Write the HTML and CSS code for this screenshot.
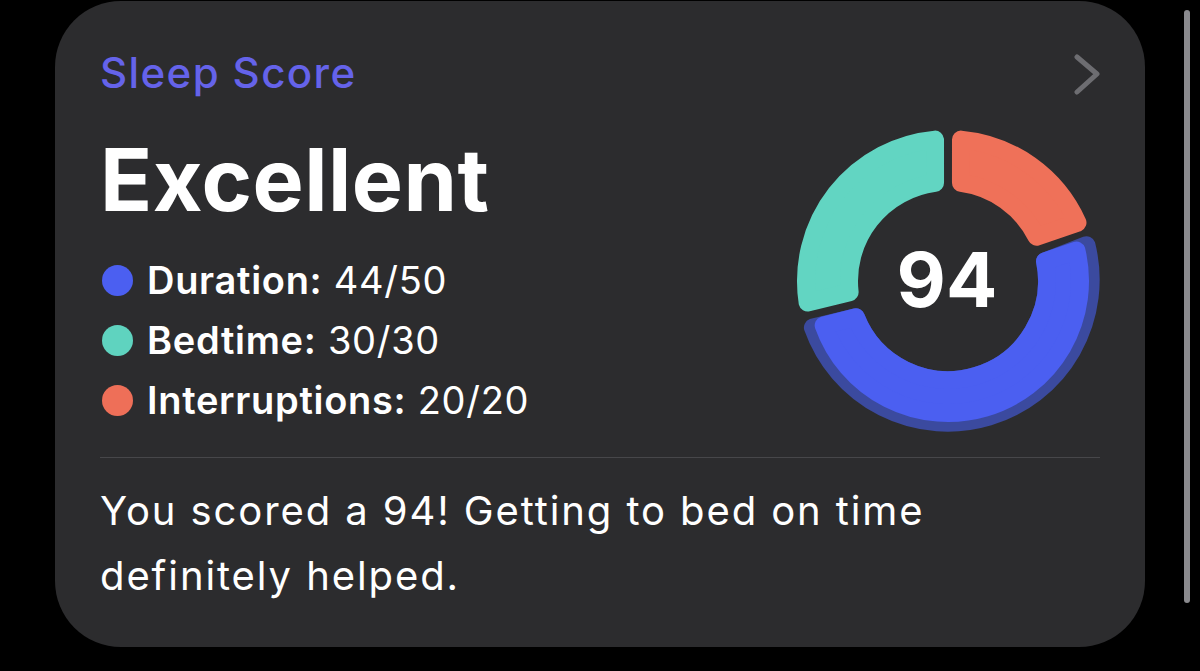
FILE: index.html
```html
<!DOCTYPE html>
<html lang="en">
<head>
<meta charset="utf-8">
<title>Sleep Score</title>
<link rel="stylesheet" href="styles.css">
</head>
<body>
<div class="screen">
  <section class="card">
    <div class="top">
      <div class="info">
        <h2 class="eyebrow">Sleep Score</h2>
        <h1 class="rating">Excellent</h1>
        <ul class="legend">
          <li><span class="dot dot-blue"></span><b>Duration:</b> 44/50</li>
          <li><span class="dot dot-teal"></span><b>Bedtime:</b> 30/30</li>
          <li><span class="dot dot-orange"></span><b>Interruptions:</b> 20/20</li>
        </ul>
      </div>
      <div class="side">
        <svg class="chevron" width="30" height="46" viewBox="0 0 30 46" aria-hidden="true">
          <path d="M7 6 L27 23 L7 41" fill="none" stroke="#6d6d71" stroke-width="5" stroke-linecap="round" stroke-linejoin="round"/>
        </svg>
        <svg class="donut" width="320" height="320" viewBox="0 0 320 320" aria-label="Score 94">
          <g stroke-width="18" stroke-linejoin="round">
            <path fill="#3b4a9f" stroke="#3b4a9f" d="M298.45 124.20 A143 143 0 0 1 24.9 206.5 L67.90 196.31 A99 99 0 0 0 257.02 140.29 Z"/>
            <path fill="#4b5ff1" stroke="#4b5ff1" d="M288.43 129.50 A132 132 0 0 1 35.68 204.37 L67.90 196.31 A99 99 0 0 0 257.02 140.29 Z"/>
            <path fill="#62d5c2" stroke="#62d5c2" d="M19.65 181.60 A142 142 0 0 1 147.01 18.60 L147.04 61.85 A99 99 0 0 0 61.63 171.17 Z"/>
            <path fill="#ef7159" stroke="#ef7159" d="M172.99 18.60 A142 142 0 0 1 289.47 101.68 L248.59 115.79 A99 99 0 0 0 172.96 61.85 Z"/>
          </g>
          <text class="score" x="159" y="186" text-anchor="middle">94</text>
        </svg>
      </div>
    </div>
    <hr class="divider">
    <p class="summary">You scored a 94! Getting to bed on time definitely helped.</p>
  </section>
  <div class="scrollbar"></div>
</div>
</body>
</html>
```

FILE: styles.css
```css
* { box-sizing: border-box; }

html, body {
  margin: 0;
  padding: 0;
  background: #000;
  width: 1200px;
  height: 671px;
  overflow: hidden;
  font-family: Inter, "Noto Sans", "Liberation Sans", sans-serif;
  color: #fff;
}

.screen {
  display: flex;
  align-items: flex-start;
  padding-left: 55px;
}

.card {
  width: 1090px;
  height: 646px;
  margin-top: 1px;
  background: #2c2c2e;
  border-radius: 66px;
  padding: 48px 45px 0 45px;
}

.top {
  display: flex;
  justify-content: space-between;
}

.info {
  display: flex;
  flex-direction: column;
}

.eyebrow {
  margin: 0;
  font-size: 42px;
  line-height: 48px;
  font-weight: 500;
  color: #6563ea;
  letter-spacing: 1.4px;
}

.rating {
  margin: 33px 0 0 0;
  font-size: 86px;
  line-height: 100px;
  font-weight: 700;
  letter-spacing: 0.5px;
}

.legend {
  list-style: none;
  margin: 20px 0 0 0;
  padding: 0;
}

.legend li {
  display: flex;
  align-items: center;
  font-size: 38px;
  line-height: 60px;
  font-weight: 400;
  letter-spacing: 0.7px;
  white-space: pre;
}

.legend b {
  font-weight: 600;
}

.dot {
  width: 31px;
  height: 31px;
  border-radius: 50%;
  margin: 0 14px 0 2px;
  flex: none;
}

.dot-blue { background: #4b5ff1; }
.dot-teal { background: #5fd3bf; }
.dot-orange { background: #ee6f58; }

.side {
  display: flex;
  flex-direction: column;
  align-items: flex-end;
  margin-right: -8px;
}

.chevron {
  margin-top: 2px;
  margin-right: 8px;
}

.donut {
  margin-top: 24px;
  overflow: visible;
}

.score {
  font-family: Inter, "Noto Sans", sans-serif;
  font-size: 76px;
  font-weight: 700;
  fill: #fff;
}

.divider {
  margin: 16px 0 0 0;
  border: 0;
  height: 1px;
  background: #47474a;
}

.summary {
  margin: 20px 0 0 0;
  font-size: 40px;
  line-height: 65px;
  font-weight: 400;
  letter-spacing: 1.9px;
}

.scrollbar {
  width: 6px;
  height: 593px;
  margin-top: 10px;
  margin-left: 39px;
  border-radius: 3px;
  background: #8a8a8e;
}
```
